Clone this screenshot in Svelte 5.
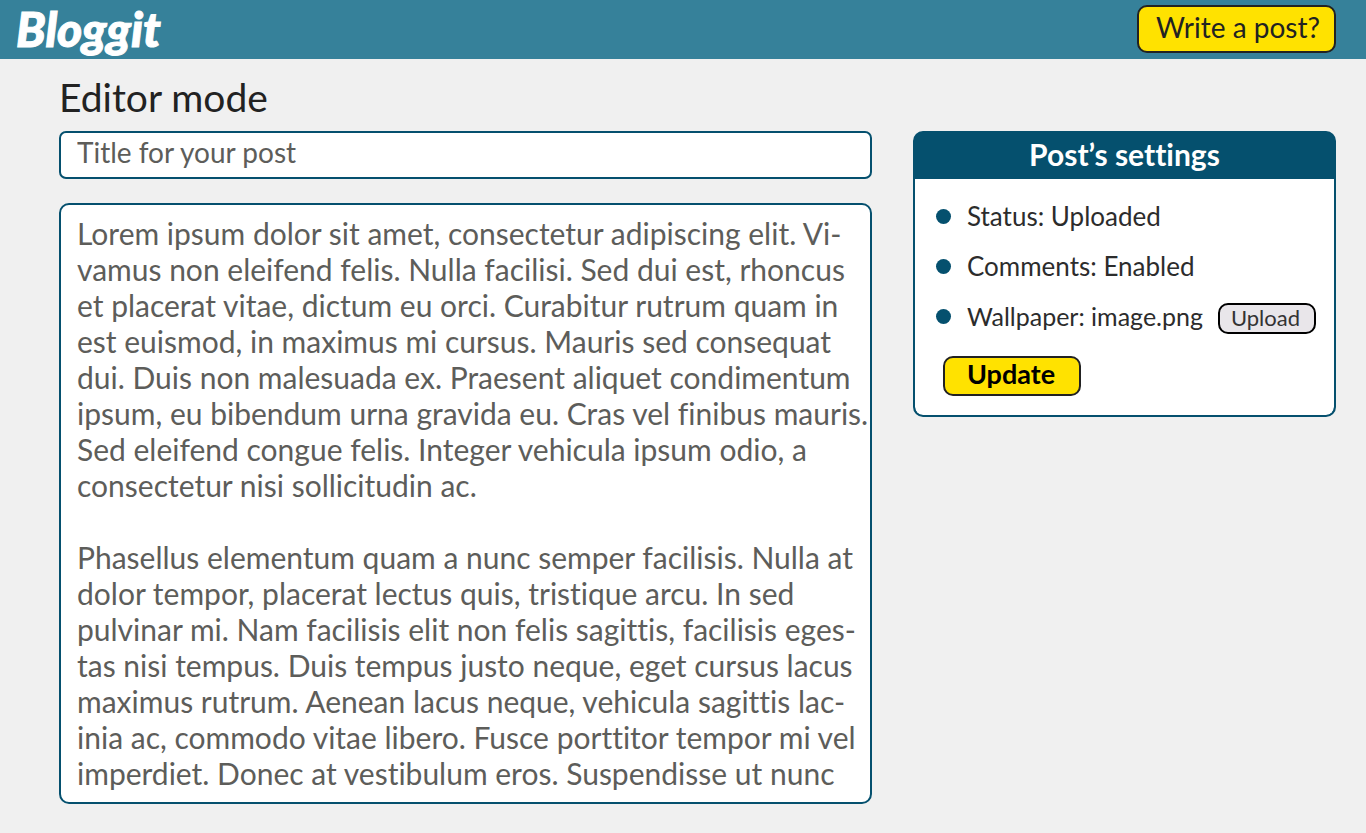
<script>
  let title = $state('');
  let body = $state(
    [
      'Lorem ipsum dolor sit amet, consectetur adipiscing elit. Vi-',
      'vamus non eleifend felis. Nulla facilisi. Sed dui est, rhoncus',
      'et placerat vitae, dictum eu orci. Curabitur rutrum quam in',
      'est euismod, in maximus mi cursus. Mauris sed consequat',
      'dui. Duis non malesuada ex. Praesent aliquet condimentum',
      'ipsum, eu bibendum urna gravida eu. Cras vel finibus mauris.',
      'Sed eleifend congue felis. Integer vehicula ipsum odio, a',
      'consectetur nisi sollicitudin ac.',
      '',
      'Phasellus elementum quam a nunc semper facilisis. Nulla at',
      'dolor tempor, placerat lectus quis, tristique arcu. In sed',
      'pulvinar mi. Nam facilisis elit non felis sagittis, facilisis eges-',
      'tas nisi tempus. Duis tempus justo neque, eget cursus lacus',
      'maximus rutrum. Aenean lacus neque, vehicula sagittis lac-',
      'inia ac, commodo vitae libero. Fusce porttitor tempor mi vel',
      'imperdiet. Donec at vestibulum eros. Suspendisse ut nunc'
    ].join('\n')
  );
</script>

<div class="page">
  <header class="topbar">
    <a class="logo" href="#home">Bloggit</a>
    <button class="btn write" type="button">Write a post?</button>
  </header>

  <main>
    <h1>Editor mode</h1>
    <div class="columns">
      <form class="editor">
        <input class="field title" type="text" aria-label="Title for your post" placeholder="Title for your post" bind:value={title} />
        <textarea class="field body" aria-label="Post text" spellcheck="false" bind:value={body}></textarea>
      </form>

      <aside class="settings">
        <h2>Post’s settings</h2>
        <div class="panel">
          <ul>
            <li>Status: Uploaded</li>
            <li>Comments: Enabled</li>
            <li class="file">Wallpaper: image.png <button class="btn upload" type="button">Upload</button></li>
          </ul>
          <button class="btn update" type="button">Update</button>
        </div>
      </aside>
    </div>
  </main>
</div>

<style>
  :global(body) {
    margin: 0;
    background: #f0f0f0;
  }

  .page {
    --navy: #05506e;
    --yellow: #ffe200;
    display: flex;
    flex-direction: column;
    min-height: 100vh;
    box-sizing: border-box;
    padding-bottom: 29px;
    font-family: Lato, sans-serif;
    font-variant-ligatures: none;
    color: #222;
  }

  .page * {
    box-sizing: border-box;
  }

  .topbar {
    display: flex;
    align-items: center;
    justify-content: space-between;
    height: 59px;
    padding: 0 30px 2px 16px;
    background: #36819a;
  }

  .logo {
    font-family: Forte, Lato, cursive;
    font-size: 48px;
    font-style: italic;
    font-weight: 900;
    line-height: 57px;
    color: #fff;
    text-decoration: none;
    -webkit-text-stroke: 1px #fff;
  }

  .btn {
    border: 2px solid #222;
    border-radius: 10px;
    background: var(--yellow);
    font-family: inherit;
    font-variant-ligatures: inherit;
    cursor: pointer;
    white-space: nowrap;
  }

  .write {
    height: 48px;
    padding: 0 14px 4px 17px;
    font-size: 28px;
    line-height: 36px;
    color: #222;
  }

  main {
    flex: 1;
    display: flex;
    flex-direction: column;
    padding: 16px 30px 0 59px;
  }

  h1 {
    margin: 0 0 12px;
    font-size: 39px;
    font-weight: 400;
    line-height: 44px;
  }

  .columns {
    flex: 1;
    display: grid;
    grid-template-columns: minmax(0, 813fr) minmax(0, 423fr);
    gap: 41px;
  }

  .editor {
    display: flex;
    flex-direction: column;
    gap: 24px;
  }

  .field {
    display: block;
    width: 100%;
    border: 2px solid var(--navy);
    background: #fff;
    color: #5d5d5a;
    font-family: inherit;
    font-variant-ligatures: inherit;
    line-height: 36px;
    outline: none;
  }

  .title {
    height: 48px;
    padding: 0 16px 6px;
    border-radius: 7px;
    font-size: 28px;
  }

  .title::placeholder {
    color: #5d5d5a;
    opacity: 1;
  }

  .body {
    flex: 1;
    padding: 10px 8px 10px 16px;
    border-radius: 10px;
    font-size: 30px;
    white-space: pre;
    overflow: hidden;
    resize: none;
  }

  .settings {
    align-self: start;
    border: 2px solid var(--navy);
    border-radius: 10px;
    background: var(--navy);
    overflow: hidden;
  }

  h2 {
    margin: 0;
    padding-bottom: 4px;
    color: #fff;
    font-size: 30px;
    font-weight: 700;
    line-height: 42px;
    text-align: center;
  }

  .panel {
    padding: 12px 18px 19px 21px;
    background: #fff;
    border-radius: 0 0 8px 8px;
  }

  ul {
    margin: 0 0 15px;
    padding: 0;
    list-style: none;
  }

  li {
    display: flex;
    align-items: center;
    height: 50px;
    color: #2c2c2c;
    font-size: 26px;
    line-height: 48px;
    white-space: nowrap;
  }

  li::before {
    content: "";
    flex: none;
    width: 15px;
    height: 15px;
    margin-right: 16px;
    border-radius: 50%;
    background: var(--navy);
  }

  .file {
    font-size: 25px;
  }

  .upload {
    height: 31px;
    margin: 4px 0 0 auto;
    padding: 0 14px 0 11px;
    border-color: #000;
    background: #e9e6ea;
    color: #333;
    font-size: 22px;
    line-height: 26px;
  }

  .update {
    display: block;
    height: 40px;
    margin-left: 7px;
    padding: 0 24px 4px 22px;
    color: #000;
    font-size: 27px;
    font-weight: 700;
    line-height: 32px;
  }
</style>
